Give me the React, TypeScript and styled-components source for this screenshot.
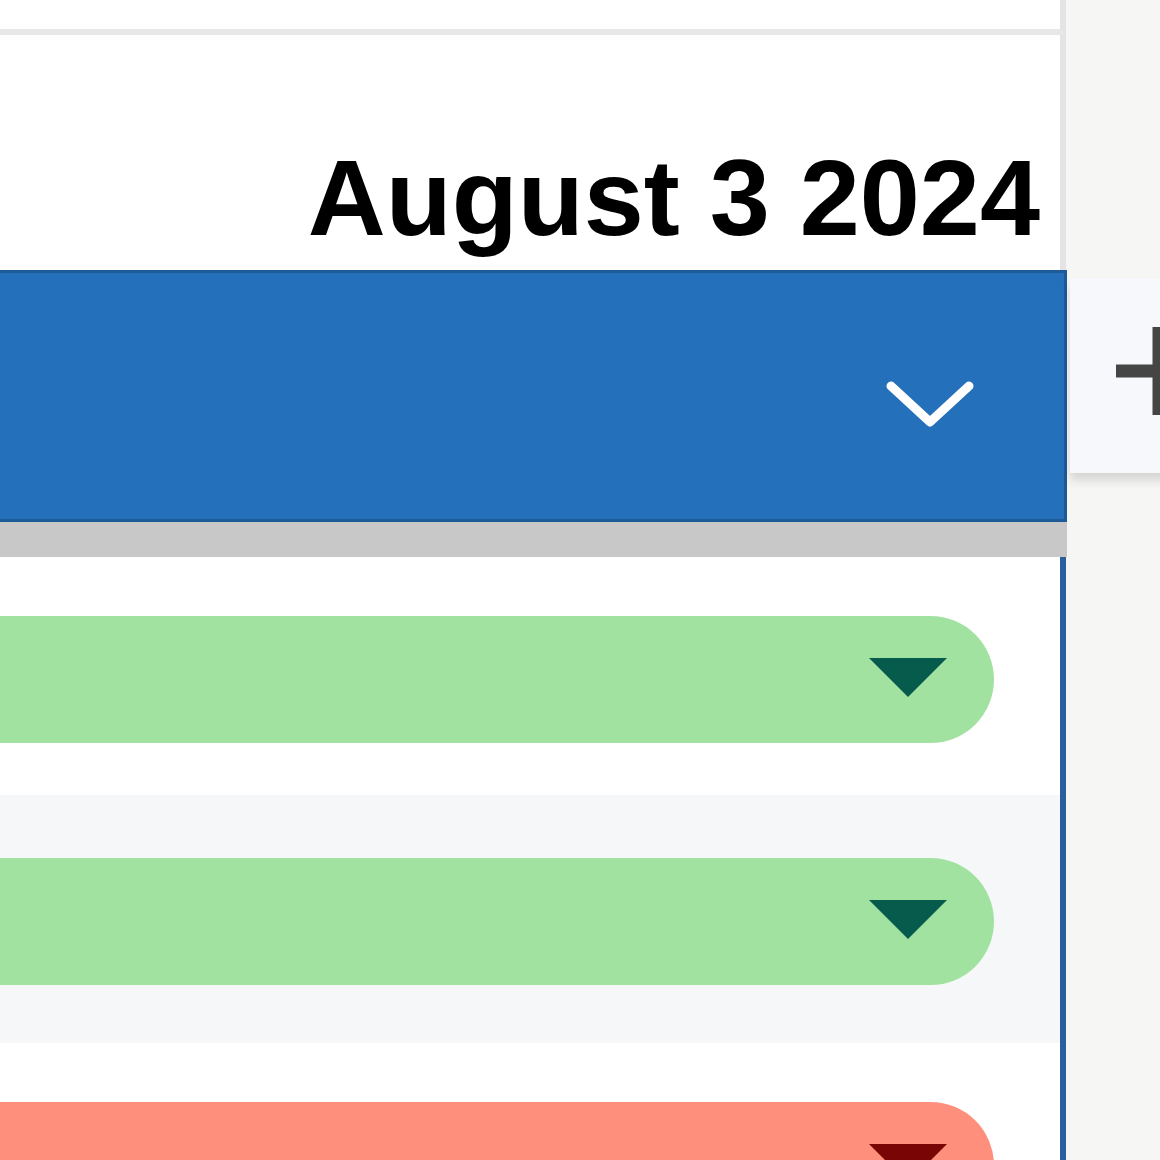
import React from 'react';
import styled, { createGlobalStyle } from 'styled-components';

const GlobalStyle = createGlobalStyle`
  html, body {
    margin: 0;
    padding: 0;
    background: #f6f7f5;
    font-family: 'Liberation Sans', Arial, sans-serif;
  }
  #root {
    height: 1160px;
    overflow: hidden;
  }
`;

const Page = styled.div`
  display: flex;
  width: 1160px;
  height: 1160px;
  overflow: hidden;
`;

const Main = styled.div`
  width: 1067px;
  flex-shrink: 0;
  display: flex;
  flex-direction: column;
  overflow: hidden;

  & > * {
    flex-shrink: 0;
  }
`;

const Side = styled.div`
  flex: 1;
  background: #f6f7f5;
  padding-top: 278px;
  padding-left: 3px;
`;

const TopStrip = styled.div`
  height: 29px;
  background: #ffffff;
  border-bottom: 6px solid #e7e7e7;
  margin-right: 1px;
  border-right: 6px solid #e4e4e4;
`;

const DateHeader = styled.div`
  height: 235px;
  box-sizing: border-box;
  background: #ffffff;
  margin-right: 1px;
  border-right: 6px solid #e4e4e4;
  display: flex;
  align-items: flex-end;
  justify-content: flex-end;
  padding: 0 20px 18px 0;
`;

const DateText = styled.div`
  font-size: 108px;
  font-weight: 700;
  line-height: 1;
  color: #000000;
  white-space: nowrap;
`;

const BlueBar = styled.div`
  height: 252px;
  box-sizing: border-box;
  background: #2570bb;
  border: 3px solid #1d5a98;
  border-left: none;
  display: flex;
  align-items: center;
  justify-content: flex-end;
  padding-right: 89px;
`;

const GrayBar = styled.div`
  height: 35px;
  background: #c8c8c8;
`;

const Body = styled.div`
  margin-right: 1px;
  border-right: 6px solid #2b5e9d;
  display: flex;
  flex-direction: column;
`;

const Row = styled.div<{ $h: number; $pad: number; $shade?: boolean }>`
  height: ${(p) => p.$h}px;
  flex-shrink: 0;
  box-sizing: border-box;
  padding: ${(p) => p.$pad}px 66px 0 0;
  background: ${(p) => (p.$shade ? '#f6f7f9' : '#ffffff')};
`;

const Pill = styled.div<{ $tone: 'ok' | 'bad' }>`
  height: 127px;
  border-radius: 0 64px 64px 0;
  background: ${(p) => (p.$tone === 'ok' ? '#a2e2a0' : '#ff8f7d')};
  display: flex;
  align-items: center;
  justify-content: flex-end;
  padding-right: 47px;
`;

const Caret = styled.div<{ $tone: 'ok' | 'bad' }>`
  width: 0;
  height: 0;
  border-left: 39px solid transparent;
  border-right: 39px solid transparent;
  border-top: 39px solid ${(p) => (p.$tone === 'ok' ? '#075b4c' : '#7a0505')};
  margin-top: -4px;
`;

const AddButton = styled.div`
  height: 195px;
  background: #f7f8fc;
  box-shadow: 0 7px 10px rgba(0, 0, 0, 0.14);
  display: flex;
  align-items: center;
  padding-left: 46px;
`;

const Chevron = () => (
  <svg width="90" height="56" viewBox="0 0 90 56" style={{ marginTop: 20 }}>
    <polyline points="6,8 45,44 84,8" fill="none" stroke="#ffffff" strokeWidth="9" strokeLinecap="round" strokeLinejoin="round" />
  </svg>
);

const PlusIcon = () => (
  <svg width="86" height="88" viewBox="0 0 86 88" style={{ marginTop: -10, flexShrink: 0 }}>
    <line x1="0" y1="44" x2="86" y2="44" stroke="#454545" strokeWidth="13" />
    <line x1="43" y1="0" x2="43" y2="88" stroke="#454545" strokeWidth="13" />
  </svg>
);

const rows: { h: number; pad: number; shade: boolean; tone: 'ok' | 'bad' }[] = [
  { h: 238, pad: 59, shade: false, tone: 'ok' },
  { h: 248, pad: 63, shade: true, tone: 'ok' },
  { h: 248, pad: 59, shade: false, tone: 'bad' },
];

export default function App() {
  return (
    <>
      <GlobalStyle />
      <Page>
        <Main>
          <TopStrip />
          <DateHeader>
            <DateText>August 3 2024</DateText>
          </DateHeader>
          <BlueBar>
            <Chevron />
          </BlueBar>
          <GrayBar />
          <Body>
            {rows.map((r, i) => (
              <Row key={i} $h={r.h} $pad={r.pad} $shade={r.shade}>
                <Pill $tone={r.tone}>
                  <Caret $tone={r.tone} />
                </Pill>
              </Row>
            ))}
          </Body>
        </Main>
        <Side>
          <AddButton>
            <PlusIcon />
          </AddButton>
        </Side>
      </Page>
    </>
  );
}
